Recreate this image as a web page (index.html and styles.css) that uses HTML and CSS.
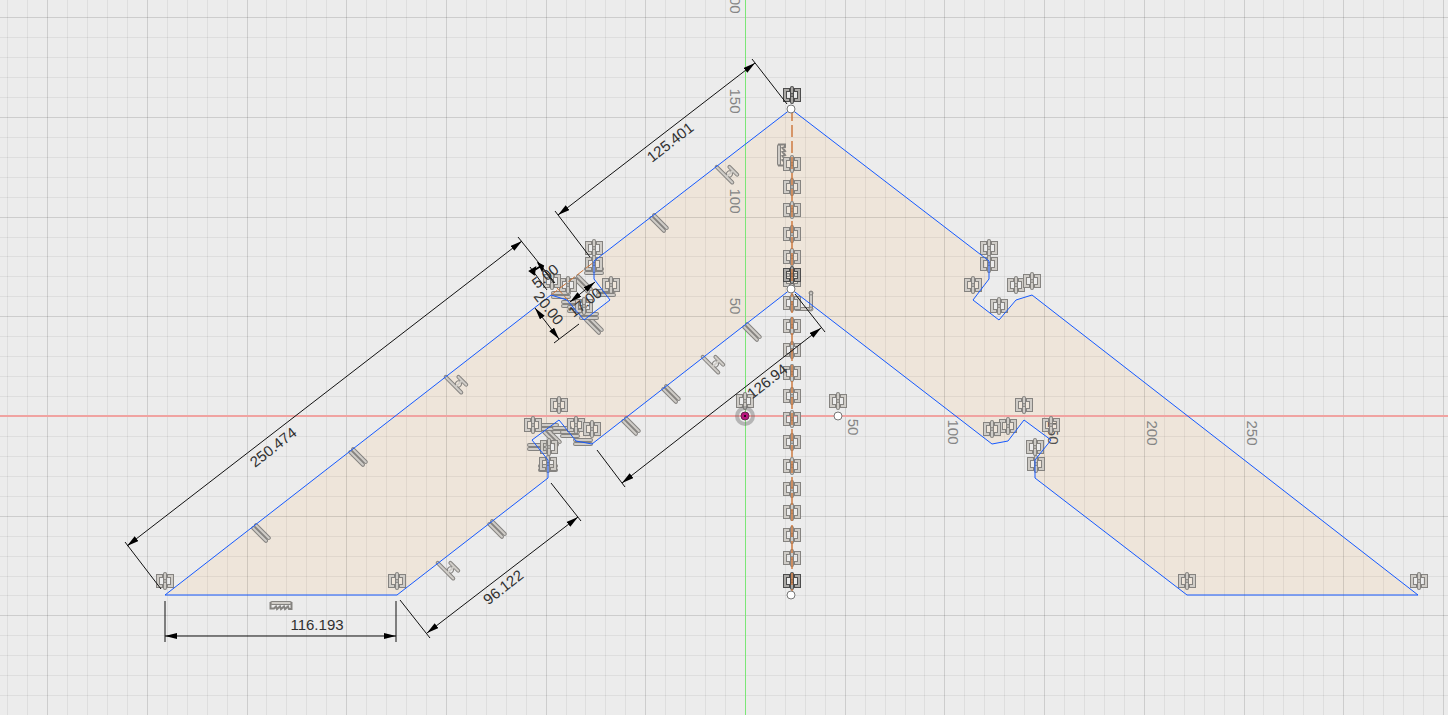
FILE: index.html
```html
<!DOCTYPE html>
<html lang="en">
<head>
<meta charset="utf-8">
<title>Sketch</title>
<link rel="stylesheet" href="styles.css">
</head>
<body>
<main class="viewport">
<svg class="sketch" viewBox="0 0 1448 715" role="img" aria-label="Sketch with dimensions and constraints">
  <defs>
    <g id="sym">
      <path class="edge square" d="M-2 -5H-7V5H-2M2 -5H7V5H2"/>
      <path class="core square" d="M-3 -5H-7V5H-3M3 -5H7V5H3"/>
      <path class="edge" d="M0 -7V7"/>
      <path class="core" d="M0 -7V7"/>
      <circle class="ring" r="1.5"/>
    </g>
    <g id="par" transform="rotate(45)">
      <path class="edge" d="M-9 -2H9M-9 2H9"/>
      <path class="core" d="M-9 -2H9M-9 2H9"/>
    </g>
    <g id="equ" transform="rotate(45)">
      <circle class="ring" cx="1" cy="-1" r="3"/>
      <path class="edge" d="M-13 3H9M-4 -6H7"/>
      <path class="core" d="M-13 3H9M-4 -6H7M1 -5V2"/>
    </g>
    <g id="rods">
      <path class="edge" d="M-8 -2H8M-8 2H8"/>
      <path class="core" d="M-8 -2H8M-8 2H8"/>
    </g>
    <g id="hor">
      <path class="edge" d="M-9 -2H9"/>
      <path class="core" d="M-9 -2H9"/>
      <path class="outline" d="M-10.5 -3V3.5H-7L-5 1.5L-4 4L-1 1.5L0 4L3 1.5L4 4L7 1.5L8 4H10.5V-3"/>
    </g>
    <marker id="arrow" viewBox="0 0 12 6" markerWidth="12" markerHeight="6" refX="12" refY="3" orient="auto-start-reverse" markerUnits="userSpaceOnUse">
      <path d="M0 0L12 3L0 6Z"/>
    </marker>
  </defs>

  <path class="profile" d="M791 109L989 261V279L973 300L999 320L1016 300L1032 295L1418 595H1187L1035 478V460L1051 440L1024 420L1008 441L992 444L791 289L592 444L576 441L559 420L532 440L548 460V478L397 595H165L551 295L567 300L584 320L610 300L594 279V261Z"/>
  <g id="grid"></g>
  <path class="axis-x" d="M0 416H1448"/>
  <rect class="axis-y" x="745" y="0" width="1" height="715"/>

  <g class="scale">
    <text transform="translate(735 1) rotate(90)">200</text>
    <text transform="translate(735 101) rotate(90)">150</text>
    <text transform="translate(735 201) rotate(90)">100</text>
    <text transform="translate(735 306) rotate(90)">50</text>
    <text transform="translate(853 427) rotate(90)">50</text>
    <text transform="translate(953 432) rotate(90)">100</text>
    <text class="dark" transform="translate(1053 432) rotate(90)">150</text>
    <text transform="translate(1152 433) rotate(90)">200</text>
    <text transform="translate(1252 433) rotate(90)">250</text>
  </g>

  <g class="icons">
    <use href="#par" transform="translate(659 223)"/>
    <use href="#par" transform="translate(752 332)"/>
    <use href="#par" transform="translate(671 394)"/>
    <use href="#par" transform="translate(631 426)"/>
    <use href="#par" transform="translate(358 457)"/>
    <use href="#par" transform="translate(261 533)"/>
    <use href="#par" transform="translate(497 529)"/>
    <use href="#par" transform="translate(594 325)"/>
    <use href="#par" transform="translate(583 284)"/>
    <use href="#par" transform="translate(552 437)"/>
    <use href="#equ" transform="translate(728 174)"/>
    <use href="#equ" transform="translate(457 384)"/>
    <use href="#equ" transform="translate(714 364)"/>
    <use href="#equ" transform="translate(449 570)"/>
    <use href="#hor" transform="translate(281 605)"/>
    <use href="#hor" transform="translate(781 155) rotate(-90)"/>
    <use href="#rods" transform="translate(594 271)"/>
    <use href="#rods" transform="translate(606 293)"/>
    <use href="#rods" transform="translate(561 295)"/>
    <use href="#rods" transform="translate(571 304)"/>
    <use href="#rods" transform="translate(577 309)"/>
    <use href="#rods" transform="translate(589 316)"/>
    <use href="#rods" transform="translate(549 427)"/>
    <use href="#rods" transform="translate(562 430)"/>
    <use href="#rods" transform="translate(570 434)"/>
    <use href="#rods" transform="translate(583 442)"/>
    <use href="#rods" transform="translate(537 447)"/>
    <use href="#rods" transform="translate(548 468)"/>
    <path class="edge" d="M811 293V308M796 309H810"/>
    <path class="core" d="M811 293V308M796 309H810"/>
    <circle class="ring" cx="811" cy="293" r="2"/>
    <circle class="ring" cx="811" cy="309" r="2"/>
    <use href="#sym" x="594" y="248"/><use href="#sym" x="594" y="264"/>
    <use href="#sym" x="611" y="285"/><use href="#sym" x="568" y="285"/>
    <use href="#sym" x="552" y="281"/><use href="#sym" x="584" y="306"/>
    <use href="#sym" x="989" y="248"/><use href="#sym" x="989" y="264"/>
    <use href="#sym" x="973" y="285"/><use href="#sym" x="999" y="306"/>
    <use href="#sym" x="1016" y="285"/><use href="#sym" x="1032" y="281"/>
    <use href="#sym" x="559" y="405"/><use href="#sym" x="533" y="425"/>
    <use href="#sym" x="576" y="425"/><use href="#sym" x="592" y="429"/>
    <use href="#sym" x="549" y="447"/><use href="#sym" x="548" y="464"/>
    <use href="#sym" x="1024" y="405"/><use href="#sym" x="1051" y="425"/>
    <use href="#sym" x="1008" y="426"/><use href="#sym" x="992" y="429"/>
    <use href="#sym" x="1035" y="447"/><use href="#sym" x="1036" y="464"/>
    <use href="#sym" x="165" y="581"/><use href="#sym" x="397" y="581"/>
    <use href="#sym" x="1187" y="581"/><use href="#sym" x="1419" y="581"/>
    <use href="#sym" x="745" y="401"/><use href="#sym" x="838" y="401"/>
    <g id="column"></g>
  </g>
  <g class="icons strong">
    <use href="#sym" x="792" y="95"/>
    <use href="#sym" x="792" y="275"/>
    <use href="#sym" x="792" y="581"/>
  </g>

  <path class="construction center" d="M792 109V595"/>
  <path class="construction short" d="M551 295L594 262M557 288L568 300"/>
  <path class="outline-blue" d="M791 109L989 261V279L973 300L999 320L1016 300L1032 295L1418 595H1187L1035 478V460L1051 440L1024 420L1008 441L992 444L791 289L592 444L576 441L559 420L532 440L548 460V478L397 595H165L551 295L567 300L584 320L610 300L594 279V261Z"/>

  <g class="dims">
    <path class="ext" d="M125 542L161 589M518 237L555 283M555 211L590 257M752 59L787 104M597 450L625 487M795 294L825 332M400 600L430 638M551 483L581 521M165 601V642M396 601V642M554 343L579 324M530 267L547 290M538 263L554 283"/>
    <path class="dim" d="M127 546L522 241"/>
    <path class="dim" d="M558 215L755 63"/>
    <path class="dim" d="M622 483L821 328"/>
    <path class="dim" d="M427 633L578 517"/>
    <path class="dim" d="M165 636H396"/>
    <path class="dim" d="M570 302L595 282"/>
    <path class="dim" d="M535 308L559 339"/>
    <path class="solid" d="M530 271L535 268L534 274ZM539 264L543 266L542 270ZM533 271L541 266"/>
  </g>
  <g class="values">
    <text transform="translate(273 447) rotate(-38)">250.474</text>
    <text transform="translate(670 142) rotate(-38)">125.401</text>
    <text transform="translate(767 381) rotate(-38)">126.94</text>
    <text transform="translate(503 587) rotate(-38)">96.122</text>
    <text transform="translate(317 624)">116.193</text>
    <text transform="translate(545 276) rotate(-38)">5.00</text>
    <text transform="translate(585 302) rotate(-38)">17.00</text>
    <text transform="translate(549 308) rotate(52)">20.00</text>
  </g>

  <circle class="halo" cx="745" cy="416" r="8"/>
  <circle class="origin" cx="745" cy="416" r="4"/>
  <circle class="origin-dot" cx="745" cy="416" r="1"/>
  <g class="points">
    <circle cx="791" cy="109" r="4"/>
    <circle cx="791" cy="289" r="4"/>
    <circle cx="838" cy="416" r="4"/>
    <circle cx="791" cy="595" r="4"/>
  </g>
</svg>
</main>
<script src="sketch.js"></script>
</body>
</html>
```
FILE: styles.css
```css
body {
  margin: 0;
  background: #ececec;
}

.viewport {
  overflow: hidden;
}

.sketch {
  display: block;
  width: 100%;
  height: auto;
  font-family: "Liberation Sans", Arial, sans-serif;
  font-size: 15px;
}

.sketch path,
.sketch circle {
  fill: none;
}

.sketch .profile {
  fill: #eee5da;
}

.minor {
  stroke: rgba(0, 0, 0, 0.06);
  shape-rendering: crispEdges;
}

.major {
  stroke: rgba(0, 0, 0, 0.13);
  shape-rendering: crispEdges;
}

.axis-x {
  stroke: #f0a3a1;
  stroke-width: 2;
}

.axis-y {
  fill: #7be677;
}

.scale text,
.values text {
  text-anchor: middle;
  dominant-baseline: central;
}

.scale {
  fill: #858585;
}

.scale .dark {
  fill: #505050;
}

.values {
  fill: #303030;
}

.icons {
  --edge: #858380;
  --core: #cfccc7;
}

.strong {
  --edge: #4c4c4c;
  --core: #aaa8a5;
}

.edge {
  stroke: var(--edge);
  stroke-width: 4;
  stroke-linecap: round;
}

.core {
  stroke: var(--core);
  stroke-width: 2;
  stroke-linecap: round;
}

.square {
  stroke-linecap: butt;
}

.ring {
  stroke: var(--edge);
}

.outline {
  stroke: var(--edge);
  stroke-width: 2;
}

.construction {
  stroke: #cc7436;
  stroke-dasharray: 12 4;
}

.center {
  stroke-width: 2;
  stroke-opacity: 0.7;
}

.short {
  stroke-dasharray: 8 3;
}

.outline-blue {
  stroke: #1559ff;
}

.ext,
.dim {
  stroke: #111111;
}

.dim {
  marker-start: url(#arrow);
  marker-end: url(#arrow);
}

.sketch marker path {
  fill: #000000;
}

.sketch .solid {
  fill: #000000;
  stroke: #000000;
  stroke-width: 2;
}

.halo {
  stroke: rgba(100, 100, 100, 0.4);
  stroke-width: 4;
}

.sketch .origin {
  fill: #b8177d;
  stroke: #63264d;
  stroke-width: 1;
}

.sketch .origin-dot {
  fill: #000000;
}

.sketch .points circle {
  fill: #ffffff;
  stroke: #777777;
}
```
FILE: sketch.js
```js
const NS = "http://www.w3.org/2000/svg";
const origin = { x: 745, y: 416 };
const major = 99.7;

function add(parent, name, attributes) {
  const node = document.createElementNS(NS, name);
  for (const key in attributes) node.setAttribute(key, attributes[key]);
  parent.appendChild(node);
}

const grid = document.getElementById("grid");
for (let i = -40; i <= 40; i++) {
  const cls = i % 5 === 0 ? "major" : "minor";
  const x = Math.round(origin.x + (i * major) / 5);
  const y = Math.round(origin.y + (i * major) / 5);
  if (x >= 0 && x <= 1448 && i !== 0) add(grid, "path", { class: cls, d: `M${x} 0V715` });
  if (y >= 0 && y <= 715 && i !== 0) add(grid, "path", { class: cls, d: `M0 ${y}H1448` });
}

// Symmetry constraints spaced evenly along the centre line
const column = document.getElementById("column");
for (let i = 0; i < 18; i++) {
  add(column, "use", { href: "#sym", x: 792, y: Math.round(164 + i * 23.2) });
}
```
